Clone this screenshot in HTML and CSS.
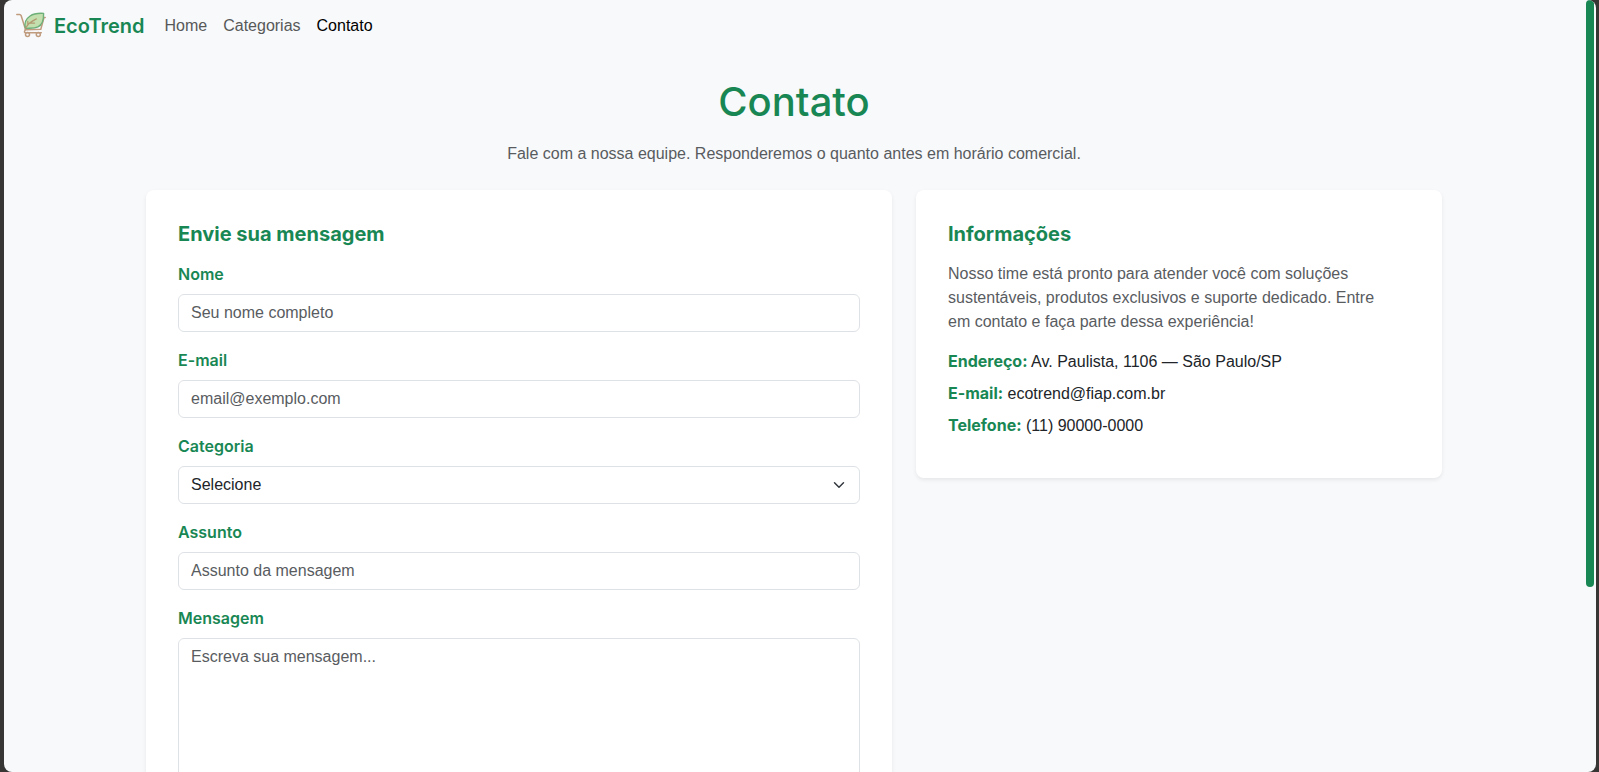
FILE: index.html
```html
<!DOCTYPE html>
<html lang="pt-BR">
<head>
<meta charset="utf-8">
<meta name="viewport" content="width=device-width, initial-scale=1">
<title>Contato</title>
<link rel="stylesheet" href="styles.css">
</head>
<body>
<div class="window">
  <div class="page">
    <nav class="navbar">
      <a class="brand" href="#">
        <svg class="brand-logo" viewBox="0 1 30 30" fill="none" aria-hidden="true">
          <g stroke="#c09c7e" stroke-width="1.5" stroke-linecap="round" stroke-linejoin="round">
            <path d="M.8 4.400h2.800c.8 0 1.200.4 1.500 1.200l4.200 13.200c.2.9.1 1.500-.6 2.300-.6.900-.2 1.700.8 1.700h15.800"/>
            <path d="M29.200 7.500h-1.200l-3.200 11.700-15.500.5"/>
            <circle cx="11.500" cy="24.500" r="2"/>
            <circle cx="22.300" cy="24.500" r="2"/>
          </g>
          <path d="M27.600 3.400c.2 6-1.300 11.300-5.600 13.400-4 2-8.700 1.100-12.500 1.600-1.300-4.400.2-9.400 4.600-12.400 3.600-2.500 8.500-2.900 13.500-2.600z" fill="#c3dfae" stroke="#6caf78" stroke-width="1.400" stroke-linejoin="round"/>
          <path d="M9.600 18.300c2.500-5 6-7.200 10.800-9.400M11.800 14.900v-3.500M13.300 13.200l5.300-.1" stroke="#b29a72" stroke-width="1.200" stroke-linecap="round"/>
        </svg>
        <span>EcoTrend</span>
      </a>
      <a class="nav-link" href="#">Home</a>
      <a class="nav-link" href="#">Categorias</a>
      <a class="nav-link active" href="#" aria-current="page">Contato</a>
    </nav>

    <main class="container">
      <header class="intro">
        <h1>Contato</h1>
        <p>Fale com a nossa equipe. Responderemos o quanto antes em horário comercial.</p>
      </header>

      <div class="columns">
        <section class="card">
          <h2>Envie sua mensagem</h2>
          <form>
            <div class="field">
              <label for="nome">Nome</label>
              <input class="control" id="nome" type="text" placeholder="Seu nome completo">
            </div>
            <div class="field">
              <label for="email">E-mail</label>
              <input class="control" id="email" type="email" placeholder="email@exemplo.com">
            </div>
            <div class="field">
              <label for="categoria">Categoria</label>
              <select class="control select" id="categoria"><option>Selecione</option></select>
            </div>
            <div class="field">
              <label for="assunto">Assunto</label>
              <input class="control" id="assunto" type="text" placeholder="Assunto da mensagem">
            </div>
            <div class="field">
              <label for="mensagem">Mensagem</label>
              <textarea class="control" id="mensagem" rows="6" placeholder="Escreva sua mensagem..."></textarea>
            </div>
          </form>
        </section>

        <section class="card">
          <h2>Informações</h2>
          <p class="lead">Nosso time está pronto para atender você com soluções sustentáveis, produtos exclusivos e suporte dedicado. Entre em contato e faça parte dessa experiência!</p>
          <p class="info"><strong>Endereço:</strong> Av. Paulista, 1106 — São Paulo/SP</p>
          <p class="info"><strong>E-mail:</strong> ecotrend@fiap.com.br</p>
          <p class="info"><strong>Telefone:</strong> (11) 90000-0000</p>
        </section>
      </div>
    </main>
  </div>
  <div class="scrollbar"><div class="thumb"></div></div>
</div>
</body>
</html>
```

FILE: styles.css
```css
:root {
  --green: #198754;
  --ink: #212529;
  --muted: #595c5f;
  --line: #dee2e6;
  --surface: #f8f9fb;
  --heading-font: Inter, "Liberation Sans", sans-serif;
}

* { box-sizing: border-box; }

body {
  margin: 0;
  padding: 0 3px 0 4px;
  background: #373635;
  color: var(--ink);
  font-family: "Liberation Sans", Arial, sans-serif;
  font-size: 16px;
  line-height: 24px;
}

.window {
  display: flex;
  height: 100vh;
  background: var(--surface);
  border-radius: 8px;
  overflow: hidden;
}

.page {
  flex: 1;
  min-width: 0;
  overflow-y: auto;
  scrollbar-width: none;
}

.scrollbar {
  width: 12px;
  padding: 0 2px;
}

.thumb {
  height: 76%;
  background: var(--green);
  border-radius: 4px;
}

.navbar {
  display: flex;
  align-items: center;
  padding: 11px 12px;
}

.brand {
  display: flex;
  align-items: center;
  gap: 8px;
  margin-right: 12px;
  color: var(--green);
  font-family: var(--heading-font);
  font-size: 20px;
  font-weight: 600;
  line-height: 30px;
  text-decoration: none;
}

.brand-logo {
  width: 30px;
  height: 30px;
}

.nav-link {
  padding: 0 8px;
  color: #575858;
  text-decoration: none;
}

.nav-link.active { color: #000; }

.container {
  max-width: 1320px;
  margin: 0 auto;
  padding: 26px 12px 24px;
}

.intro {
  margin-bottom: 24px;
  text-align: center;
}

h1, h2, p { margin: 0; }

h1, h2, label, .info strong {
  color: var(--green);
  font-family: var(--heading-font);
}

h1 {
  margin-bottom: 16px;
  font-size: 40px;
  font-weight: 500;
  line-height: 48px;
}

.intro p, .lead { color: var(--muted); }

.columns {
  display: grid;
  grid-template-columns: 746fr 526fr;
  gap: 24px;
  align-items: start;
}

.card {
  padding: 32px;
  background: #fff;
  border-radius: 8px;
  box-shadow: 0 2px 4px rgba(0, 0, 0, 0.075);
}

h2 {
  margin-bottom: 16px;
  font-size: 20px;
  font-weight: 700;
  line-height: 24px;
}

.field { margin-bottom: 16px; }

label {
  display: block;
  margin-bottom: 8px;
  font-weight: 600;
}

.control {
  display: block;
  width: 100%;
  padding: 6px 12px;
  border: 1px solid var(--line);
  border-radius: 6px;
  background-color: #fff;
  color: var(--ink);
  font: inherit;
}

.control::placeholder {
  color: var(--muted);
  opacity: 1;
}

.select {
  appearance: none;
  background-image: url("data:image/svg+xml,%3Csvg xmlns='http://www.w3.org/2000/svg' viewBox='0 0 16 16'%3E%3Cpath fill='none' stroke='%23343a40' stroke-linecap='round' stroke-linejoin='round' stroke-width='2' d='m2 5 6 6 6-6'/%3E%3C/svg%3E");
  background-repeat: no-repeat;
  background-position: right 12px center;
  background-size: 16px 12px;
}

textarea.control { resize: vertical; }

.lead {
  margin-bottom: 16px;
  padding-right: 16px;
}

.info { margin-bottom: 8px; }

.info strong {
  font-weight: 700;
  line-height: 1;
}
```
